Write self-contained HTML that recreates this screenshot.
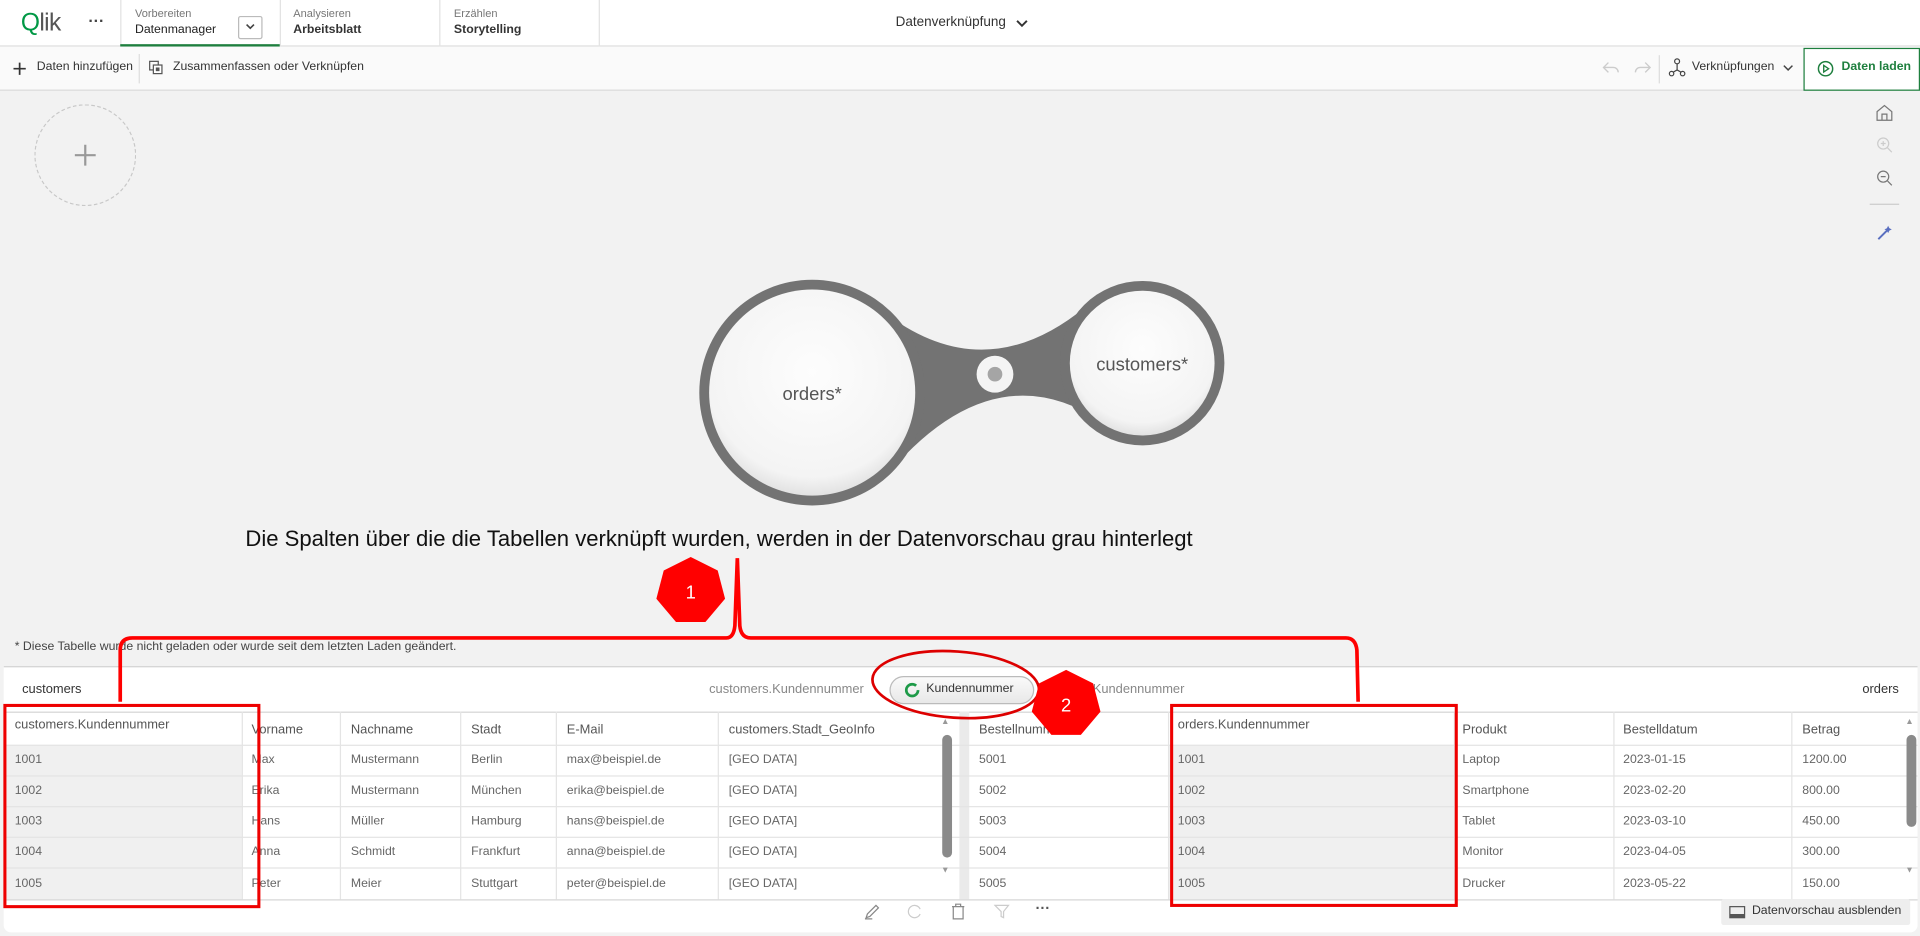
<!DOCTYPE html>
<html><head><meta charset="utf-8">
<style>
*{box-sizing:border-box;margin:0;padding:0}
html,body{width:1920px;height:936px;overflow:hidden;background:#fff;font-family:"Liberation Sans",sans-serif}
#w{position:absolute;left:0;top:0;width:1565px;height:763px;transform:scale(1.22685);transform-origin:0 0;background:#f2f2f2;overflow:hidden}
.a{position:absolute}
.t{position:absolute;white-space:nowrap}
.sm{font-size:9px;color:#777}
.bd{font-size:10px;color:#333;font-weight:bold}
.top{left:0;top:0;width:1565px;height:38px;background:#fff;border-bottom:1px solid #ddd}
.tb{left:0;top:38px;width:1565px;height:36px;background:#fafafa;border-bottom:1px solid #d9d9d9}
.panel{left:3px;top:543px;width:1560px;height:217px;background:#fff;border-top:1px solid #ccc;border-radius:0 0 6px 6px}
.hc{position:absolute;font-size:10.5px;color:#555;white-space:nowrap}
.cell{position:absolute;font-size:10px;color:#666;white-space:nowrap}
.vl{position:absolute;width:1px;background:#e4e4e4}
.hl{position:absolute;height:1px;background:#e4e4e4}
</style></head><body><div id="w">
<div class="a top"></div>
<div class="t" style="left:17px;top:8px;font-size:20px;color:#555;letter-spacing:-0.5px"><span style="color:#009845">Q</span>lik</div>
<div class="t" style="left:72px;top:9px;font-size:13px;color:#444;font-weight:bold">···</div>
<div class="a" style="left:98px;top:0;width:1px;height:38px;background:#e2e2e2"></div>
<div class="a" style="left:228px;top:0;width:1px;height:38px;background:#e2e2e2"></div>
<div class="a" style="left:358px;top:0;width:1px;height:38px;background:#e2e2e2"></div>
<div class="a" style="left:488px;top:0;width:1px;height:38px;background:#e2e2e2"></div>
<div class="a" style="left:98px;top:36px;width:130px;height:2px;background:#1e7f3e"></div>
<div class="t sm" style="left:110px;top:6px">Vorbereiten</div>
<div class="t bd" style="left:110px;top:19px;font-weight:normal;color:#222">Datenmanager</div>
<div class="a" style="left:194px;top:13px;width:20px;height:19px;border:1px solid #bbb;border-radius:2px;background:#fff"></div>
<svg class="a" style="left:199px;top:18px" width="10" height="8"><path d="M2 2l3 3 3-3" stroke="#444" stroke-width="1.3" fill="none"/></svg>
<div class="t sm" style="left:239px;top:6px">Analysieren</div>
<div class="t bd" style="left:239px;top:19px">Arbeitsblatt</div>
<div class="t sm" style="left:370px;top:6px">Erzählen</div>
<div class="t bd" style="left:370px;top:19px">Storytelling</div>
<div class="t" style="left:730px;top:12px;font-size:11px;color:#333">Datenverknüpfung</div>
<svg class="a" style="left:827px;top:14px" width="12" height="10"><path d="M2 3l4 4 4-4" stroke="#333" stroke-width="1.6" fill="none"/></svg>
<div class="a tb"></div>
<svg class="a" style="left:10px;top:50px" width="12" height="12"><path d="M6 1v10M1 6h10" stroke="#333" stroke-width="1.4"/></svg>
<div class="t" style="left:30px;top:49px;font-size:10px;color:#333">Daten hinzufügen</div>
<div class="a" style="left:113px;top:44px;width:1px;height:24px;background:#ddd"></div>
<svg class="a" style="left:121px;top:49px" width="13" height="13"><rect x="1" y="1" width="7" height="7" fill="none" stroke="#555"/><rect x="4" y="4" width="7" height="7" fill="#fff" stroke="#555"/><rect x="6" y="6" width="3" height="3" fill="#555"/></svg>
<div class="t" style="left:141px;top:49px;font-size:10px;color:#333">Zusammenfassen oder Verknüpfen</div>
<svg class="a" style="left:1306px;top:49px" width="14" height="12"><path d="M5 2L1 6l4 4M1 6h8a4 4 0 0 1 4 4" stroke="#ccc" stroke-width="1.1" fill="none"/></svg>
<svg class="a" style="left:1332px;top:49px" width="14" height="12"><path d="M9 2l4 4-4 4M13 6H5a4 4 0 0 0-4 4" stroke="#ccc" stroke-width="1.1" fill="none"/></svg>
<div class="a" style="left:1352px;top:45px;width:1px;height:23px;background:#ddd"></div>
<svg class="a" style="left:1360px;top:47px" width="14" height="16"><circle cx="7" cy="3" r="2" fill="none" stroke="#444"/><circle cx="2.5" cy="13" r="1.8" fill="none" stroke="#444"/><circle cx="11.5" cy="13" r="1.8" fill="none" stroke="#444"/><path d="M7 5v5M7 10L3.5 12M7 10l3.5 2" stroke="#444"/></svg>
<div class="t" style="left:1379px;top:49px;font-size:10px;color:#333">Verknüpfungen</div>
<svg class="a" style="left:1453px;top:52px" width="9" height="7"><path d="M1 1.5l3.5 3.5 3.5-3.5" stroke="#444" stroke-width="1.2" fill="none"/></svg>
<div class="a" style="left:1470px;top:39px;width:95px;height:35px;border:1px solid #1e7f3e;background:#fff"></div>
<svg class="a" style="left:1481px;top:49px" width="14" height="14"><circle cx="7" cy="7" r="5.8" fill="none" stroke="#1e7f3e" stroke-width="1.2"/><path d="M5.5 4.3v5.4L9.5 7z" fill="none" stroke="#1e7f3e" stroke-width="1.1"/></svg>
<div class="t" style="left:1501px;top:49px;font-size:10px;color:#1e7f3e;font-weight:bold">Daten laden</div>
<div class="a" style="left:28px;top:85px;width:83px;height:83px;border:1px dashed #c8c8c8;border-radius:50%"></div>
<svg class="a" style="left:60px;top:117px" width="19" height="19"><path d="M9.5 1v17M1 9.5h17" stroke="#999" stroke-width="1.8"/></svg>
<svg class="a" style="left:1528px;top:84px" width="16" height="16"><path d="M2 7L8 2l6 5v7H2z M6 14V9h4v5" fill="none" stroke="#777" stroke-width="1"/></svg>
<svg class="a" style="left:1529px;top:111px" width="14" height="14"><circle cx="6" cy="6" r="4.5" fill="none" stroke="#ccc"/><path d="M9.5 9.5l3.5 3.5M6 4v4M4 6h4" stroke="#ccc"/></svg>
<svg class="a" style="left:1529px;top:138px" width="14" height="14"><circle cx="6" cy="6" r="4.5" fill="none" stroke="#777"/><path d="M9.5 9.5l3.5 3.5M4 6h4" stroke="#777"/></svg>
<div class="a" style="left:1524px;top:166px;width:24px;height:1px;background:#ccc"></div>
<svg class="a" style="left:1529px;top:183px" width="14" height="14"><path d="M2 12L11 3" stroke="#5a6fc0" stroke-width="1.6"/><path d="M10 1l1 2 2 1-2 1-1 2-1-2-2-1 2-1z" fill="#5a6fc0"/></svg>
<svg class="a" style="left:0;top:0" width="1565" height="543">
<defs><radialGradient id="g" cx="50%" cy="40%" r="60%"><stop offset="0" stop-color="#fdfdfd"/><stop offset="0.85" stop-color="#f4f4f4"/><stop offset="1" stop-color="#e2e2e2"/></radialGradient></defs>
<path d="M715 250 Q800 320 885 250 L900 345 Q811 285 725 385 Z" fill="#737373"/>
<circle cx="662" cy="320" r="92" fill="#737373"/>
<circle cx="662" cy="320" r="84" fill="url(#g)"/>
<circle cx="931" cy="296" r="67" fill="#737373"/>
<circle cx="931" cy="296" r="59" fill="url(#g)"/>
<circle cx="811" cy="305" r="15" fill="#f4f4f4"/>
<circle cx="811" cy="305" r="6" fill="#a5a5a5"/>
<text x="662" y="326" font-family="Liberation Sans" font-size="15" fill="#555" text-anchor="middle">orders*</text>
<text x="931" y="302" font-family="Liberation Sans" font-size="15" fill="#555" text-anchor="middle">customers*</text>
</svg>
<div class="t" style="left:200px;top:429px;font-size:18px;color:#111">Die Spalten über die die Tabellen verknüpft wurden, werden in der Datenvorschau grau hinterlegt</div>
<div class="t" style="left:12px;top:522px;font-size:10px;color:#444">* Diese Tabelle wurde nicht geladen oder wurde seit dem letzten Laden geändert.</div>
<div class="a panel"></div>
<div class="t" style="left:18px;top:556px;font-size:10.5px;color:#333">customers</div>
<div class="t" style="left:578px;top:556px;font-size:10.5px;color:#888">customers.Kundennummer</div>
<div class="t" style="left:858px;top:556px;font-size:10.5px;color:#888">orders.Kundennummer</div>
<div class="t" style="left:1518px;top:556px;font-size:10.5px;color:#333">orders</div>
<div class="a" style="left:725px;top:551px;width:118px;height:23px;border:1px solid #bbb;border-radius:12px;background:linear-gradient(#fafafa,#e8e8e8)"></div>
<svg class="a" style="left:737px;top:556px" width="13" height="13"><circle cx="6.5" cy="6.5" r="4.8" fill="none" stroke="#1e9a48" stroke-width="2.2" stroke-dasharray="26 4"/></svg>
<div class="t" style="left:755px;top:556px;font-size:10px;color:#333">Kundennummer</div>
<div class="hl" style="left:3px;top:580px;width:1560px;background:#d5d5d5"></div>
<div class="a" style="left:3px;top:607px;width:194px;height:126px;background:#f0f0f0"></div>
<div class="a" style="left:782px;top:580px;width:8px;height:153px;background:#eaeaea"></div>
<div class="a" style="left:952px;top:607px;width:233px;height:126px;background:#f0f0f0"></div>
<div class="vl" style="left:197px;top:580px;height:153px"></div>
<div class="vl" style="left:277px;top:580px;height:153px"></div>
<div class="vl" style="left:375px;top:580px;height:153px"></div>
<div class="vl" style="left:453px;top:580px;height:153px"></div>
<div class="vl" style="left:585px;top:580px;height:153px"></div>
<div class="vl" style="left:952px;top:580px;height:153px"></div>
<div class="vl" style="left:1185px;top:580px;height:153px"></div>
<div class="vl" style="left:1315px;top:580px;height:153px"></div>
<div class="vl" style="left:1460px;top:580px;height:153px"></div>
<div class="hl" style="left:3px;top:607px;width:1560px"></div>
<div class="hl" style="left:3px;top:632px;width:1560px"></div>
<div class="hl" style="left:3px;top:657px;width:1560px"></div>
<div class="hl" style="left:3px;top:682px;width:1560px"></div>
<div class="hl" style="left:3px;top:707px;width:1560px"></div>
<div class="hl" style="left:3px;top:733px;width:1560px;background:#d5d5d5"></div>
<div class="a" style="left:768px;top:599px;width:8px;height:100px;background:#8a8a8a;border-radius:4px"></div>
<div class="a" style="left:1554px;top:599px;width:8px;height:75px;background:#8a8a8a;border-radius:4px"></div>
<div class="t" style="left:767px;top:585px;font-size:7px;color:#999">▲</div>
<div class="t" style="left:767px;top:706px;font-size:7px;color:#999">▼</div>
<div class="t" style="left:1553px;top:585px;font-size:7px;color:#999">▲</div>
<div class="t" style="left:1553px;top:706px;font-size:7px;color:#999">▼</div>
<div class="hc" style="left:12px;top:585px">customers.Kundennummer</div>
<div class="hc" style="left:205px;top:589px">Vorname</div>
<div class="hc" style="left:286px;top:589px">Nachname</div>
<div class="hc" style="left:384px;top:589px">Stadt</div>
<div class="hc" style="left:462px;top:589px">E-Mail</div>
<div class="hc" style="left:594px;top:589px">customers.Stadt_GeoInfo</div>
<div class="hc" style="left:798px;top:589px">Bestellnummer</div>
<div class="hc" style="left:960px;top:585px">orders.Kundennummer</div>
<div class="hc" style="left:1192px;top:589px">Produkt</div>
<div class="hc" style="left:1323px;top:589px">Bestelldatum</div>
<div class="hc" style="left:1469px;top:589px">Betrag</div>
<div class="cell" style="left:12px;top:614px">1001</div><div class="cell" style="left:205px;top:614px">Max</div><div class="cell" style="left:286px;top:614px">Mustermann</div><div class="cell" style="left:384px;top:614px">Berlin</div><div class="cell" style="left:462px;top:614px">max@beispiel.de</div><div class="cell" style="left:594px;top:614px">[GEO DATA]</div><div class="cell" style="left:798px;top:614px">5001</div><div class="cell" style="left:960px;top:614px">1001</div><div class="cell" style="left:1192px;top:614px">Laptop</div><div class="cell" style="left:1323px;top:614px">2023-01-15</div><div class="cell" style="left:1469px;top:614px">1200.00</div>
<div class="cell" style="left:12px;top:639px">1002</div><div class="cell" style="left:205px;top:639px">Erika</div><div class="cell" style="left:286px;top:639px">Mustermann</div><div class="cell" style="left:384px;top:639px">München</div><div class="cell" style="left:462px;top:639px">erika@beispiel.de</div><div class="cell" style="left:594px;top:639px">[GEO DATA]</div><div class="cell" style="left:798px;top:639px">5002</div><div class="cell" style="left:960px;top:639px">1002</div><div class="cell" style="left:1192px;top:639px">Smartphone</div><div class="cell" style="left:1323px;top:639px">2023-02-20</div><div class="cell" style="left:1469px;top:639px">800.00</div>
<div class="cell" style="left:12px;top:664px">1003</div><div class="cell" style="left:205px;top:664px">Hans</div><div class="cell" style="left:286px;top:664px">Müller</div><div class="cell" style="left:384px;top:664px">Hamburg</div><div class="cell" style="left:462px;top:664px">hans@beispiel.de</div><div class="cell" style="left:594px;top:664px">[GEO DATA]</div><div class="cell" style="left:798px;top:664px">5003</div><div class="cell" style="left:960px;top:664px">1003</div><div class="cell" style="left:1192px;top:664px">Tablet</div><div class="cell" style="left:1323px;top:664px">2023-03-10</div><div class="cell" style="left:1469px;top:664px">450.00</div>
<div class="cell" style="left:12px;top:689px">1004</div><div class="cell" style="left:205px;top:689px">Anna</div><div class="cell" style="left:286px;top:689px">Schmidt</div><div class="cell" style="left:384px;top:689px">Frankfurt</div><div class="cell" style="left:462px;top:689px">anna@beispiel.de</div><div class="cell" style="left:594px;top:689px">[GEO DATA]</div><div class="cell" style="left:798px;top:689px">5004</div><div class="cell" style="left:960px;top:689px">1004</div><div class="cell" style="left:1192px;top:689px">Monitor</div><div class="cell" style="left:1323px;top:689px">2023-04-05</div><div class="cell" style="left:1469px;top:689px">300.00</div>
<div class="a" style="left:3px;top:708px;width:1560px;height:25px;overflow:hidden">
<div class="cell" style="left:9px;top:7px">1005</div><div class="cell" style="left:202px;top:7px">Peter</div><div class="cell" style="left:283px;top:7px">Meier</div><div class="cell" style="left:381px;top:7px">Stuttgart</div><div class="cell" style="left:459px;top:7px">peter@beispiel.de</div><div class="cell" style="left:591px;top:7px">[GEO DATA]</div><div class="cell" style="left:795px;top:7px">5005</div><div class="cell" style="left:957px;top:7px">1005</div><div class="cell" style="left:1189px;top:7px">Drucker</div><div class="cell" style="left:1320px;top:7px">2023-05-22</div><div class="cell" style="left:1466px;top:7px">150.00</div>
</div>
<svg class="a" style="left:704px;top:736px" width="14" height="14"><path d="M2 12l1-3 7-7 2 2-7 7z M1 13h6" fill="none" stroke="#888"/></svg>
<svg class="a" style="left:739px;top:736px" width="14" height="14"><path d="M11 5a5 5 0 1 0 0 4" fill="none" stroke="#ccc"/></svg>
<svg class="a" style="left:775px;top:736px" width="12" height="14"><path d="M1 3h10M4 3V1h4v2M2 3v10h8V3" fill="none" stroke="#888"/></svg>
<svg class="a" style="left:810px;top:736px" width="14" height="14"><path d="M1 2h11L8 7v5L6 11V7z" fill="none" stroke="#ccc"/></svg>
<div class="t" style="left:844px;top:733px;font-size:12px;color:#555;font-weight:bold">···</div>
<div class="a" style="left:1403px;top:733px;width:154px;height:21px;background:#eee;border-radius:2px"></div>
<svg class="a" style="left:1409px;top:738px" width="14" height="11"><rect x="1" y="1" width="12" height="9" fill="none" stroke="#555"/><rect x="1" y="7" width="12" height="3" fill="#555"/></svg>
<div class="t" style="left:1428px;top:737px;font-size:10px;color:#333">Datenvorschau ausblenden</div>
<svg class="a" style="left:0;top:0" width="1565" height="763">
<path d="M98 572 L98 530 Q98 520 108 520 L592 520 Q598 520 599 510 L601 455 L603 510 Q604 520 612 520 L1097 520 Q1105 520 1106 530 L1107 572" fill="none" stroke="#f00" stroke-width="3"/>
<rect x="4" y="575" width="207" height="164" fill="none" stroke="#e00" stroke-width="2.5"/>
<rect x="955" y="575" width="232" height="163" fill="none" stroke="#e00" stroke-width="2.5"/>
<ellipse cx="779" cy="558" rx="68" ry="27" transform="rotate(4 779 558)" fill="none" stroke="#d00" stroke-width="2.2"/>
<polygon points="563,454 585,465 591,488 575,507 551,507 535,488 541,465" fill="#f00"/>
<polygon points="869,546 891,557 897,580 881,599 857,599 841,580 847,557" fill="#f00"/>
<text x="563" y="488" font-family="Liberation Sans" font-size="15" fill="#fff" text-anchor="middle">1</text>
<text x="869" y="580" font-family="Liberation Sans" font-size="15" fill="#fff" text-anchor="middle">2</text>
</svg>
</div></body></html>
